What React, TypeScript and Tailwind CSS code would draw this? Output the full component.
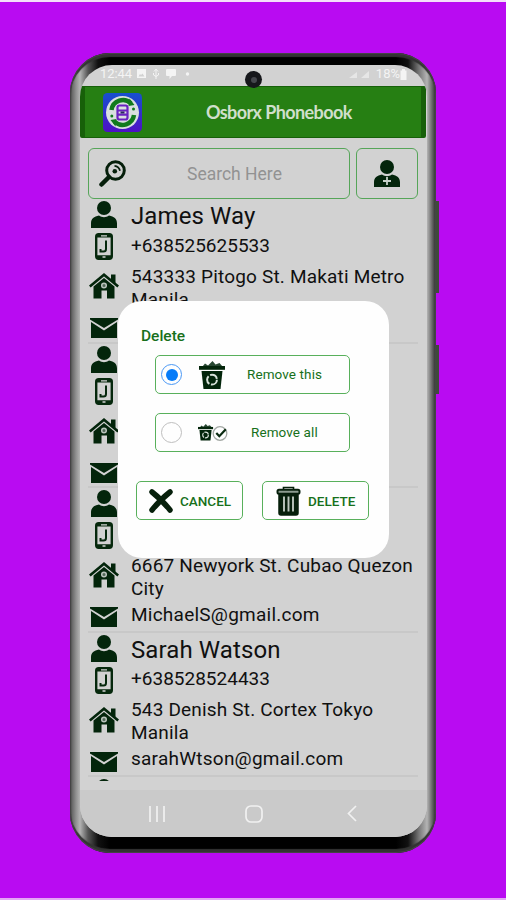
const contacts = [
  {
    name: "James Way",
    phone: "+638525625533",
    address: ["543333 Pitogo St. Makati Metro", "Manila"],
    email: ""
  },
  { name: "", phone: "", address: ["", ""], email: "" },
  {
    name: "",
    phone: "",
    address: ["6667 Newyork St. Cubao Quezon", "City"],
    email: "MichaelS@gmail.com"
  },
  {
    name: "Sarah Watson",
    phone: "+638528524433",
    address: ["543 Denish St. Cortex Tokyo", "Manila"],
    email: "sarahWtson@gmail.com"
  }
];

function PersonIcon({ plus = false }: { plus?: boolean }) {
  return (
    <svg width="26" height="27" viewBox="0 0 26 27" fill="#03250b">
      <circle cx="13" cy="7" r="7" />
      <path d="M0 27v-4.500c0-5 3-7 8-8 3 2.300 7 2.300 10 0 5 1 8 3 8 8V27z" />
      {plus && <path d="M13 17v8M9 21h8" stroke="#c6d0c8" strokeWidth="1.800" />}
    </svg>
  );
}

function MobileIcon() {
  return (
    <svg width="18" height="27" viewBox="0 0 18 27" fill="none" stroke="#06280d">
      <rect x="1.200" y="1.200" width="15.600" height="24.600" rx="2.500" strokeWidth="2.400" />
      <path d="M1.500 3h15M1.500 23.700h15" strokeWidth="3" />
      <path d="M6 2.800h6M7.500 24h3" stroke="#d2d2d2" strokeWidth="1.300" />
      <path d="M11 7.500v8.500q0 2.500-2.500 2.500H5.500v-2.500" strokeWidth="2" />
    </svg>
  );
}

function HouseIcon() {
  return (
    <svg width="30" height="26" viewBox="0 0 30 26" fill="#03250b">
      <path d="M22 1.500h4.500v9L22 7z" />
      <path d="M.8 13.500 15 1.800l14.200 11.700" fill="none" stroke="#03250b" strokeWidth="2.600" />
      <path d="M4.500 13.500 15 5l10.500 8.500V25.500H18v-8h-5.500v8h-8z" />
      <circle cx="15" cy="12.500" r="2.300" fill="#516858" stroke="#b9c2bb" strokeWidth="1.500" />
    </svg>
  );
}

function MailIcon() {
  return (
    <svg width="28" height="20" viewBox="0 0 28 20">
      <path d="M0 0h28v1.500L14 10 0 1.500z" fill="#03250b" />
      <path d="M1 4 14 12.500 27 4v16H1z" fill="#03250b" />
    </svg>
  );
}

function SearchIcon() {
  return (
    <svg width="27" height="27" viewBox="0 0 27 27" fill="none" stroke="#061f0b">
      <circle cx="16.500" cy="10.500" r="8.800" strokeWidth="3" />
      <path d="M10 17 2.500 24.500" strokeWidth="4.500" strokeLinecap="round" />
      <circle cx="15.800" cy="11.300" r="2.300" fill="#061f0b" stroke="none" />
      <path d="M15.500 5.800q4.500.5 5.500 5" strokeWidth="1.800" />
    </svg>
  );
}

function AppLogo() {
  return (
    <svg width="39" height="39" viewBox="0 0 39 39">
      <defs>
        <linearGradient id="logo" x1="0" y1="0" x2="0" y2="1">
          <stop offset="0" stopColor="#1650cf" />
          <stop offset="1" stopColor="#4f10c6" />
        </linearGradient>
      </defs>
      <rect width="39" height="39" rx="4.500" fill="url(#logo)" />
      <circle cx="19.500" cy="19.500" r="16.500" fill="#d9dfe0" />
      <path d="M8.500 17A11.500 11.500 0 0 1 28 10.500M31 22A11.500 11.500 0 0 1 11.500 28.500" fill="none" stroke="#117a1d" strokeWidth="4.500" />
      <path d="m26.500 5.500 5 6.500-6 1zM12.500 33.500l-5-6.500 6-1z" fill="#117a1d" />
      <circle cx="30.500" cy="16" r="1.500" fill="#117a1d" />
      <circle cx="8.800" cy="23" r="1.500" fill="#117a1d" />
      <path d="M16.500 12.500h6q2 0 2 2v10q0 2-2 2h-6q-2 0-2-2v-10q0-2 2-2zM14.500 17.500h10M14.500 21.700h10" fill="none" stroke="#6922c0" strokeWidth="2.200" />
      <path d="M17.500 19.600h4" stroke="#2b2462" strokeWidth="2" />
    </svg>
  );
}

function BinPath() {
  return (
    <>
      <path d="M3.500 5.500 6 2.500l3 2L13.500 0l3 3.500 4-1.500 3 3.500z" fill="#284832" />
      <path d="M0 5h26v3.800H0z" fill="#03250b" />
      <path d="M2.500 10h21l-2 18h-17z" fill="#03250b" />
      <circle cx="13" cy="18.700" r="4.900" fill="none" stroke="#d8e2da" strokeWidth="2" strokeDasharray="8.600 1.650" />
    </>
  );
}

function RecycleBinIcon() {
  return (
    <svg width="26" height="28" viewBox="0 0 26 28">
      <BinPath />
    </svg>
  );
}

function BinCheckIcon() {
  return (
    <svg width="30" height="17" viewBox="0 0 30 17">
      <g transform="scale(0.58 0.59)">
        <BinPath />
      </g>
      <circle cx="22" cy="9.500" r="6.800" fill="#fefefe" stroke="#a3a8a4" strokeWidth="1.300" />
      <path d="m18.300 9 3 3.200 6.500-7" fill="none" stroke="#0a2a11" strokeWidth="2.200" />
    </svg>
  );
}

function CrossIcon() {
  return (
    <svg width="26" height="26" viewBox="0 0 26 26" stroke="#061f0b" strokeWidth="5.500" strokeLinecap="round">
      <path d="M4 4q9 7 18 18M22 4Q13 11 4 22" fill="none" />
    </svg>
  );
}

function TrashIcon() {
  return (
    <svg width="25" height="30" viewBox="0 0 25 30" fill="none" stroke="#061f0b">
      <path d="M7.500 4V1.500h10V4" strokeWidth="1.600" />
      <rect x="1.500" y="3.800" width="22" height="4" rx="1.500" fill="#8c9c90" strokeWidth="2" />
      <path d="M3 8.500h19V27q0 2-2 2H5q-2 0-2-2z" fill="#061f0b" strokeWidth="1.500" />
      <path d="M8 10.500v15M12.500 10.500v15M17 10.500v15" stroke="#bcc7be" strokeWidth="1.900" />
    </svg>
  );
}

function StatusBar() {
  return (
    <div className="flex h-[21px] items-center pl-[20px] pr-[20px] pb-[3px] text-[13px] text-[#f4f4f4]">
      <span className="tracking-[-0.1px]">12:44</span>
      <svg className="ml-[4px]" width="56" height="12" viewBox="0 0 56 12" fill="#f4f4f4">
        <path d="M1 1h9v9H1zM2.500 8.500h6l-2-3-1.500 1.500-1-1z" fillRule="evenodd" />
        <path d="M20 11V2M18 3.500 20 1l2 2.500M17.500 5v2L20 8.500 22.500 7V5" fill="none" stroke="#f4f4f4" />
        <path d="M31 1h8q1 0 1 1v5q0 1-1 1h-3l-2.500 3V8H31q-1 0-1-1V2q0-1 1-1z" />
        <circle cx="51.500" cy="6" r="1.700" />
      </svg>
      <svg className="ml-auto" width="24" height="10" viewBox="0 0 24 10" fill="#e6e6e6">
        <path d="M1 9 9 3v6zM13 9l8-7v7z" />
      </svg>
      <span className="ml-[4px] text-[13px]">18%</span>
      <svg width="7" height="11" viewBox="0 0 7 11" fill="#f4f4f4">
        <path d="M2 0h3v1.500h1.500V11h-6V1.500H2z" />
      </svg>
    </div>
  );
}

function ContactRow({ contact }: { contact: (typeof contacts)[number] }) {
  return (
    <li className="flex h-[144.5px] shrink-0 border-b-2 border-[#c8c8c8]">
      <div className="flex w-[31px] flex-col items-center pt-[2px]">
        <PersonIcon />
        <div className="mt-[5px]"><MobileIcon /></div>
        <div className="mt-[13px]"><HouseIcon /></div>
        <div className="mt-[19px]"><MailIcon /></div>
      </div>
      <div className="ml-[12px] whitespace-nowrap text-[19px] leading-[23px] text-[#101010]">
        <div className="h-[34.500px] pt-[3px] text-[24px] leading-[28px] tracking-[0.1px]">{contact.name}</div>
        <div className="h-[31px]">{contact.phone}</div>
        <div className="h-[49px] tracking-[0.18px]">
          {contact.address.map((line, i) => (
            <div key={i}>{line}</div>
          ))}
        </div>
        <div className="h-[23px] tracking-[0.24px]">{contact.email}</div>
      </div>
    </li>
  );
}

function DeleteDialog() {
  return (
    <div className="absolute left-[38px] top-[236px] flex h-[257px] w-[271px] flex-col rounded-[24px] bg-[#fefefe] px-[18px] pt-[24px] text-[#17701b]">
      <h2 className="ml-[5px] h-[30px] text-[15.5px] font-medium leading-[22px]">Delete</h2>
      <div className="flex flex-col gap-[19px] pl-[19px]">
        <div className="flex h-[39px] w-[195px] items-center rounded-[5px] border-[1.5px] border-[#58b05b] pl-[5px]">
          <span className="flex size-[21px] items-center justify-center rounded-full border-[1.5px] border-[#4a98f5]">
            <span className="size-[12px] rounded-full bg-[#087cf8]" />
          </span>
          <span className="ml-[17px] w-[48px]"><RecycleBinIcon /></span>
          <span className="text-[13.5px] tracking-[0.1px]">Remove this</span>
        </div>
        <div className="flex h-[39px] w-[195px] items-center rounded-[5px] border-[1.5px] border-[#58b05b] pl-[5px]">
          <span className="size-[21px] rounded-full border-[1.5px] border-[#bebebe]" />
          <span className="ml-[16px] w-[53px]"><BinCheckIcon /></span>
          <span className="text-[13.5px] tracking-[0.1px]">Remove all</span>
        </div>
      </div>
      <div className="mt-[29px] flex gap-[19px] text-[13.5px] font-medium">
        <button className="flex h-[39px] w-[107px] items-center rounded-[5px] border-[1.5px] border-[#58b05b] pl-[11px]">
          <CrossIcon />
          <span className="ml-[6px] pt-px">CANCEL</span>
        </button>
        <button className="flex h-[39px] w-[107px] items-center rounded-[5px] border-[1.5px] border-[#58b05b] pl-[13px]">
          <TrashIcon />
          <span className="ml-[7px] pt-px">DELETE</span>
        </button>
      </div>
    </div>
  );
}

export default function App() {
  return (
    <div className="flex h-[900px] w-[506px] items-start overflow-hidden border-b-2 border-t-2 border-b-[#e3a6f4] border-t-[#f4dffa] bg-[#b90bf2] pl-[70px] pt-[51px] font-['Roboto',sans-serif]">
      <div className="h-[800px] w-[366px] rounded-[40px] bg-[linear-gradient(90deg,#3a3a3a_0px,#666_2px,#909090_6px,#b4b4b4_10px,#555_18px,#111_28px,#000_40px,#000_326px,#111_338px,#777_349px,#b4b4b4_357px,#777_361px,#3a3a3a_365px)] pl-[10px] pr-[9px] pt-[12px] shadow-[inset_0_0_0_1px_#444,inset_0_4px_1px_#333,inset_0_-4px_1px_#333]">
        <div className="relative flex h-[772px] w-[347px] flex-col overflow-hidden rounded-[32px] bg-[#d2d2d2]">
          <StatusBar />
          <div className="absolute left-[165px] top-[6px] flex size-[17px] items-center justify-center rounded-full bg-[#16171b]">
            <span className="size-[6px] rounded-full bg-[#45474d]" />
          </div>
          <header className="flex h-[52px] w-[346px] shrink-0 items-center rounded-[2px] border-x-[5px] border-y border-[#176009] bg-[#267f13] pl-[18px]">
            <AppLogo />
            <h1 className="ml-[64px] whitespace-nowrap font-['Lato',sans-serif] text-[18px] font-bold tracking-[-0.6px] text-[#d0dfcb]">Osborx Phonebook</h1>
          </header>
          <div className="flex shrink-0 gap-[6px] pl-[8px] pt-[10px]">
            <div className="flex h-[51px] w-[262px] items-center rounded-[6px] border-[1.5px] border-[#56a559] pl-[10px]">
              <SearchIcon />
              <span className="ml-[61px] pt-[2px] text-[17.5px] text-[#929292]">Search Here</span>
            </div>
            <button className="flex h-[51px] w-[62px] items-center justify-center rounded-[6px] border-[1.5px] border-[#56a559]">
              <PersonIcon plus />
            </button>
          </div>
          <ul className="ml-[8px] flex h-[582px] w-[330px] shrink-0 flex-col overflow-hidden">
            {contacts.map((contact, i) => (
              <ContactRow key={i} contact={contact} />
            ))}
            <li className="pl-[3px] pt-[2px]"><PersonIcon /></li>
          </ul>
          <nav className="mt-auto flex h-[47px] shrink-0 items-center bg-[#cacaca] pl-[68px]">
            <svg width="18" height="18" viewBox="0 0 18 18" stroke="#f1f1f1" strokeWidth="1.700">
              <path d="M2 1v16M9 1v16M16 1v16" />
            </svg>
            <svg className="ml-[79px]" width="18" height="18" viewBox="0 0 18 18" fill="none" stroke="#f1f1f1" strokeWidth="1.700">
              <rect x="1" y="1" width="16" height="16" rx="5" />
            </svg>
            <svg className="ml-[84px]" width="10" height="17" viewBox="0 0 10 17" fill="none" stroke="#f1f1f1" strokeWidth="1.700">
              <path d="M9 1 1.500 8.500 9 16" />
            </svg>
          </nav>
          <DeleteDialog />
        </div>
      </div>
      <div className="flex flex-col gap-[52px] pt-[148px]">
        <span className="h-[92px] w-[3px] bg-[#3f4a3c]" />
        <span className="h-[49px] w-[3px] bg-[#3f4a3c]" />
      </div>
    </div>
  );
}
